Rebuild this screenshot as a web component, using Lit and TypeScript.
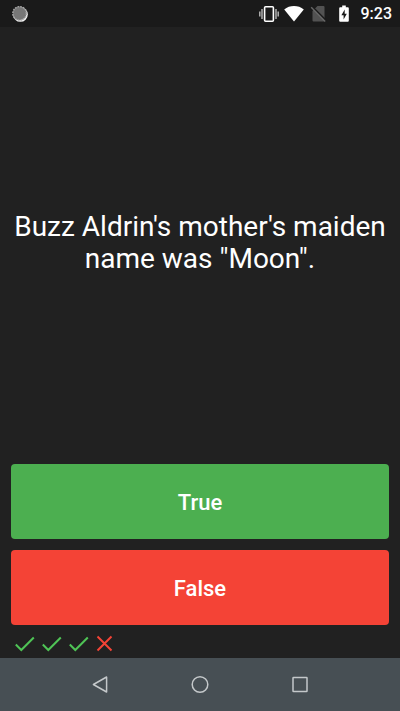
import { LitElement, html, css } from "lit";
import { customElement, state } from "lit/decorators.js";

@customElement("status-bar")
class StatusBar extends LitElement {
  static styles = css`
    :host {
      display: flex;
      align-items: center;
      height: 27px;
      padding: 0 8px 0 11px;
      background: #1a1a1a;
      color: #fff;
      font: 500 16px/27px Roboto, sans-serif;
    }
    svg {
      display: block;
      flex: none;
    }
    .left {
      flex: 1;
    }
    .icons {
      display: flex;
      gap: 5px;
      margin-right: 7px;
    }
  `;

  render() {
    return html`
      <div class="left">
        <svg width="18" height="18" viewBox="0 0 18 18" aria-hidden="true">
          <circle cx="9.4" cy="9.4" r="7.4" fill="#f4f4f4" />
          <circle cx="8.6" cy="8.4" r="6.8" fill="#777" />
          <circle cx="8.6" cy="8.4" r="6.8" fill="none" stroke="#aaa" stroke-width="1.4" stroke-dasharray="1.7 1" />
        </svg>
      </div>
      <div class="icons">
        <svg width="20" height="20" viewBox="0 0 20 20" aria-hidden="true">
          <rect x="5.6" y="2.700" width="8.800" height="14.600" rx="1" fill="none" stroke="#fff" stroke-width="1.6" />
          <path d="M3 5v10M17 5v10M.8 7.500v5M19.200 7.500v5" stroke="#bbb" stroke-width="1.400" />
        </svg>
        <svg width="20" height="20" viewBox="0 0 20 20" aria-hidden="true">
          <path d="M.2 5.400C5.700 .8 14.300 .8 19.800 5.400L10 17.600Z" fill="#fff" />
        </svg>
        <svg width="20" height="20" viewBox="0 0 20 20" aria-hidden="true">
          <path d="M8.500 2H14.500Q15.500 2 15.500 3V16.500Q15.500 17.500 14.500 17.500H4.500Q3.500 17.500 3.500 16.500V7Z" fill="#525252" />
          <path d="M3 2.600L17.400 17" stroke="#1a1a1a" stroke-width="2" />
          <path d="M2.200 3.200L16.200 17.400" stroke="#686868" stroke-width="1.400" />
        </svg>
        <svg width="20" height="20" viewBox="0 0 20 20" aria-hidden="true">
          <path d="M8.200 1.500h3.600v1.800h2q1 0 1 1V16.800q0 1-1 1H6.200q-1 0-1-1V4.300q0-1 1-1h2Z" fill="#fff" />
          <path d="M10.700 5.500L7.400 11.300h2.200v4.200L12.800 9.700h-2.100Z" fill="#1a1a1a" />
        </svg>
      </div>
      <time>9:23</time>
    `;
  }
}

@customElement("nav-bar")
class NavBar extends LitElement {
  static styles = css`
    :host {
      display: flex;
      justify-content: center;
      height: 53px;
      background: #474f54;
    }
    button {
      flex: 0 0 25%;
      display: grid;
      place-items: center;
      padding: 0;
      border: 0;
      background: none;
    }
    svg {
      display: block;
      fill: none;
      stroke: #c4c8ca;
      stroke-width: 1.5;
      stroke-linejoin: round;
    }
  `;

  render() {
    return html`
      <button aria-label="Back">
        <svg width="20" height="20" viewBox="0 0 20 20"><path d="M16.600 2V17L3.400 9.500Z" /></svg>
      </button>
      <button aria-label="Home">
        <svg width="20" height="20" viewBox="0 0 20 20"><circle cx="10" cy="9.500" r="7.800" /></svg>
      </button>
      <button aria-label="Overview">
        <svg width="20" height="20" viewBox="0 0 20 20"><rect x="3" y="2.500" width="14" height="14" rx=".5" /></svg>
      </button>
    `;
  }
}

@customElement("app-root")
class AppRoot extends LitElement {
  static styles = css`
    :host {
      display: flex;
      flex-direction: column;
      min-height: 100vh;
      background: #212121;
      color: #fff;
      font-family: Roboto, sans-serif;
    }
    main {
      flex: 1;
      display: flex;
      flex-direction: column;
      padding: 0 11px;
    }
    .question {
      flex: 1;
      display: grid;
      place-items: center;
      margin: 0;
      padding-bottom: 5px;
      font-size: 28px;
      font-weight: 400;
      line-height: 32px;
      text-align: center;
    }
    .answers {
      display: grid;
      gap: 11px;
    }
    .answer {
      height: 75px;
      padding: 2px 0 0;
      border: 0;
      border-radius: 4px;
      color: #fff;
      font: 500 22px/26px Roboto, sans-serif;
    }
    .true {
      background: #4caf50;
    }
    .false {
      background: #f44336;
    }
    .score {
      display: flex;
      gap: 7px;
      height: 33px;
      padding: 4px 4px 0;
      margin: 0;
      box-sizing: border-box;
      align-items: center;
      list-style: none;
    }
    .score svg {
      display: block;
      fill: none;
      stroke-width: 2;
    }
    .right {
      stroke: #4fc456;
    }
    .wrong {
      stroke: #f44336;
    }
  `;

  @state() private results = [true, true, true, false];

  render() {
    return html`
      <status-bar></status-bar>
      <main>
        <h1 class="question">Buzz Aldrin's mother's maiden name was "Moon".</h1>
        <div class="answers">
          <button class="answer true">True</button>
          <button class="answer false">False</button>
        </div>
        <ul class="score">
          ${this.results.map((ok) =>
            ok
              ? html`<li aria-label="Correct">
                  <svg class="right" width="20" height="20" viewBox="0 0 20 20"><path d="M.8 10.500L6.300 16L18.800 3.500" /></svg>
                </li>`
              : html`<li aria-label="Incorrect">
                  <svg class="wrong" width="20" height="20" viewBox="0 0 20 20"><path d="M1.500 2.500L15.500 16.500M15.500 2.500L1.500 16.500" /></svg>
                </li>`
          )}
        </ul>
      </main>
      <nav-bar></nav-bar>
    `;
  }
}
